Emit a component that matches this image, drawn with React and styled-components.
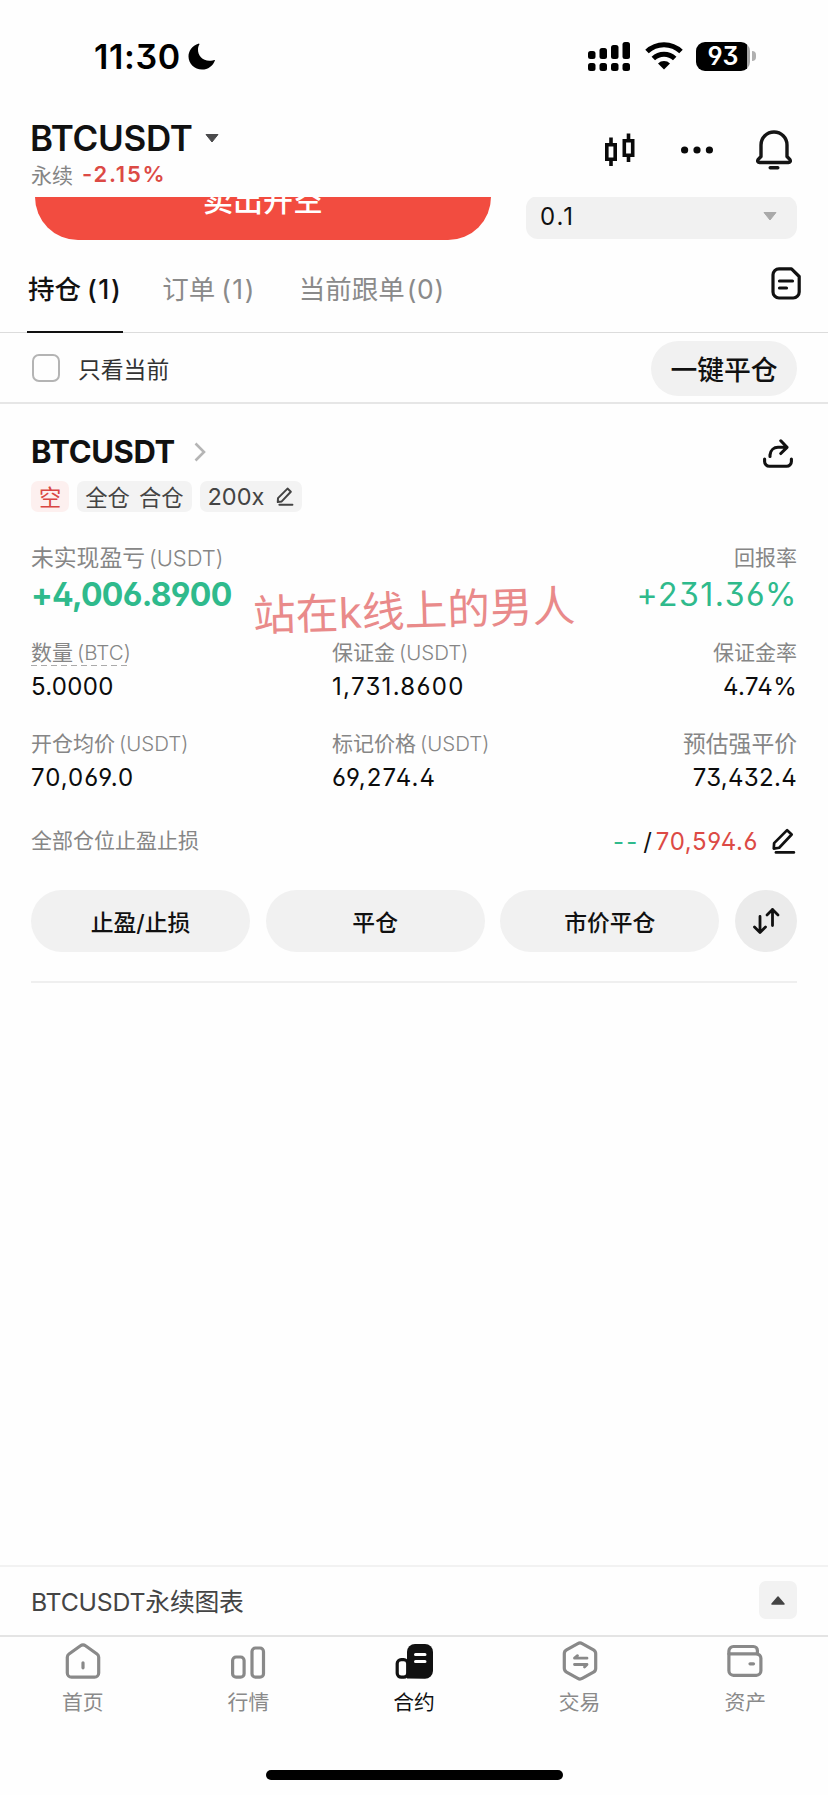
import styled, { createGlobalStyle } from "styled-components";

const positionRows = [
  [
    { label: "数量", unit: "(BTC)", value: "5.0000", dashed: true },
    { label: "保证金", unit: "(USDT)", value: "1,731.8600", spacing: 1.3 },
    { label: "保证金率", value: "4.74%" },
  ],
  [
    { label: "开仓均价", unit: "(USDT)", value: "70,069.0", spacing: 1 },
    { label: "标记价格", unit: "(USDT)", value: "69,274.4", spacing: 1.1 },
    { label: "预估强平价", value: "73,432.4", size: 22.8 },
  ],
];

const navItems = [
  { label: "首页", icon: HomeIcon },
  { label: "行情", icon: MarketIcon },
  { label: "合约", icon: FuturesIcon, active: true },
  { label: "交易", icon: TradeIcon },
  { label: "资产", icon: WalletIcon },
];

export default function App() {
  return (
    <>
      <GlobalStyle />
      <Screen>
        <StatusBar />
        <Header>
          <div>
            <PairRow>
              <Pair>BTCUSDT</Pair>
              <svg width="14" height="9" viewBox="0 0 14 9">
                <path d="M1 0.5h12L7 8z" fill="#4a4a4c" stroke="#4a4a4c" strokeLinejoin="round" />
              </svg>
            </PairRow>
            <ChangeRow>
              永续<Change>-2.15%</Change>
            </ChangeRow>
          </div>
          <HeaderIcons>
            <CandleIcon />
            <DotsIcon />
            <BellIcon />
          </HeaderIcons>
        </Header>

        <OrderStrip>
          <SellButton>卖出开空</SellButton>
          <Select>
            0.1
            <svg width="14" height="9" viewBox="0 0 14 9">
              <path d="M1 0.5h12L7 8z" fill="#a9a9a9" stroke="#a9a9a9" strokeLinejoin="round" />
            </svg>
          </Select>
        </OrderStrip>

        <Tabs>
          <Tab $active>
            持仓<TabCount>(1)</TabCount>
          </Tab>
          <Tab>
            订单<TabCount>(1)</TabCount>
          </Tab>
          <Tab>
            当前跟单<TabCount $tight>(0)</TabCount>
          </Tab>
          <OrdersIcon />
        </Tabs>

        <FilterRow>
          <Checkbox />
          <FilterLabel>只看当前</FilterLabel>
          <CloseAll>一键平仓</CloseAll>
        </FilterRow>

        <Position>
          <TitleRow>
            <Title>BTCUSDT</Title>
            <svg width="12" height="20" viewBox="0 0 12 20">
              <path d="M1.5 1.5l8.5 8.5-8.5 8.5" fill="none" stroke="#b5b5b5" strokeWidth="2.6" />
            </svg>
            <ShareIcon />
          </TitleRow>
          <Tags>
            <Tag $red>空</Tag>
            <Tag>
              <span>全仓</span>
              <span>合仓</span>
            </Tag>
            <Tag $leverage>
              200x
              <EditIcon size={19} color="#444" />
            </Tag>
          </Tags>

          <PnlRow>
            <div>
              <Label $size={22.8}>
                未实现盈亏<Unit $size={22}>(USDT)</Unit>
              </Label>
              <Pnl $bold>+4,006.8900</Pnl>
            </div>
            <Cell $right>
              <Label>回报率</Label>
              <Pnl>+231.36%</Pnl>
            </Cell>
            <Watermark>站在k线上的男人</Watermark>
          </PnlRow>

          {positionRows.map((row, i) => (
            <StatRow key={i}>
              {row.map((cell, j) => (
                <Cell key={cell.label} $right={j === 2}>
                  <Label $size={cell.size} $dashed={cell.dashed}>
                    {cell.label}
                    {cell.unit && <Unit>{cell.unit}</Unit>}
                  </Label>
                  <Value $spacing={cell.spacing}>{cell.value}</Value>
                </Cell>
              ))}
            </StatRow>
          ))}

          <StopRow>
            <Label>全部仓位止盈止损</Label>
            <StopValue>
              <Dashes>--</Dashes>
              <Slash>/</Slash>
              <StopPrice>70,594.6</StopPrice>
              <EditIcon size={26} color="#111" />
            </StopValue>
          </StopRow>

          <Actions>
            <Action>止盈/止损</Action>
            <Action>平仓</Action>
            <Action>市价平仓</Action>
            <SwapButton>
              <svg width="28" height="28" viewBox="0 0 28 28" fill="none" stroke="#111" strokeWidth="2.8" strokeLinecap="round" strokeLinejoin="round">
                <path d="M8 9.5v16M2.5 20L8 25.5l5.500-5.500" />
                <path d="M20.500 18.500V2.500M15 8L20.500 2.500l5.500 5.500" />
              </svg>
            </SwapButton>
          </Actions>
        </Position>

        <ChartBar>
          <ChartLabel>
            BTCUSDT<span>永续图表</span>
          </ChartLabel>
          <Expand>
            <svg width="14" height="9" viewBox="0 0 14 9">
              <path d="M1 8h12L7 1z" fill="#444" stroke="#444" strokeWidth="1.500" strokeLinejoin="round" />
            </svg>
          </Expand>
        </ChartBar>
        <Nav>
          {navItems.map(({ label, icon: Icon, active }) => (
            <NavItem key={label} $active={active}>
              <Icon />
              {label}
            </NavItem>
          ))}
        </Nav>
        <HomeIndicator />
      </Screen>
    </>
  );
}

function StatusBar() {
  return (
    <Status>
      <Time>11:30</Time>
      <svg width="28" height="27" viewBox="0 0 28 27">
        <path d="M11 0.500C3.500 2.500 0.500 8.500 0.500 13.500C0.500 20.500 6.500 26.500 14 26.500C20 26.500 25 23 27 17.200C26.500 16.600 25.500 17.300 24.500 17.500C16 19.500 9.500 13 10 6C10.100 3.500 11 2.200 11.500 1.200Z" fill="#000" />
      </svg>
      <Signals>
        <svg width="43" height="29" viewBox="0 0 43 29">
          <rect x="0" y="9" width="7.500" height="8" rx="2.500" />
          <rect x="11.500" y="6" width="7.500" height="11" rx="2.500" />
          <rect x="23" y="3" width="7.500" height="14" rx="2.500" />
          <rect x="34.500" y="0" width="7.500" height="17" rx="2.500" />
          <rect x="0" y="21" width="7.500" height="8" rx="2.500" />
          <rect x="11.500" y="21" width="7.500" height="8" rx="2.500" />
          <rect x="23" y="21" width="7.500" height="8" rx="2.500" />
          <rect x="34.500" y="21" width="7.500" height="8" rx="2.500" />
        </svg>
        <svg width="38" height="28" viewBox="0 0 38 28" fill="none" stroke="#000" strokeWidth="5">
          <path d="M2 9.500a24.500 24.500 0 0 1 34 0" />
          <path d="M8.300 16.500a15.500 15.500 0 0 1 21.400 0" />
          <path d="M19 27.500l-6-6a8.600 8.600 0 0 1 12 0z" fill="#000" stroke="none" />
        </svg>
        <Battery>
          <BatteryBody>93</BatteryBody>
          <BatteryTip />
        </Battery>
      </Signals>
    </Status>
  );
}

function CandleIcon() {
  return (
    <svg width="32" height="34" viewBox="0 0 32 34" fill="none" stroke="#0a0a0a" strokeWidth="3.600">
      <path d="M2.800 11.800h8.400v14.400H2.800zM7 4.500v7M7 26v7M20.300 7.800h8.400v14.400h-8.400zM24.500 0.500v7M24.500 22v7" />
    </svg>
  );
}

function DotsIcon() {
  return (
    <svg width="32" height="8" viewBox="0 0 32 8" fill="#0a0a0a">
      <circle cx="3.600" cy="4" r="3.600" />
      <circle cx="16" cy="4" r="3.600" />
      <circle cx="28.400" cy="4" r="3.600" />
    </svg>
  );
}

function BellIcon() {
  return (
    <svg width="36" height="40" viewBox="0 0 36 40" fill="none" stroke="#151515" strokeWidth="3.400" strokeLinecap="round" strokeLinejoin="round">
      <path d="M5 15a13 13 0 0 1 26 0v11.500l3 3.200c0.800 1.600 0 2.800-1.500 2.800H3.500c-1.500 0-2.300-1.200-1.500-2.800l3-3.200z" />
      <path d="M14.200 37.700h7.600" />
    </svg>
  );
}

function OrdersIcon() {
  return (
    <svg width="30" height="33" viewBox="0 0 30 33" fill="none" stroke="#111" strokeWidth="3.200" strokeLinecap="round" strokeLinejoin="round">
      <path d="M8 1.800h12.500l7.700 7.700V25a6 6 0 0 1-6 6H8a6 6 0 0 1-6-6V7.800a6 6 0 0 1 6-6z" />
      <path d="M8.500 14h13M8.500 21h7" />
    </svg>
  );
}

function ShareIcon() {
  return (
    <svg width="30" height="29" viewBox="0 0 30 29" fill="none" stroke="#111" strokeWidth="3.100" strokeLinecap="round" strokeLinejoin="round">
      <path d="M1.600 20v2.500a4.800 4.800 0 0 0 4.800 4.800h17.200a4.800 4.800 0 0 0 4.800-4.800V20" />
      <path d="M7 17.500v-1.500C7.500 11 11 8.300 15 8.300h8.500M17.800 1.800l6.200 6.500-6.200 6.200" />
    </svg>
  );
}

function EditIcon({ size, color }) {
  return (
    <svg width={size} height={size} viewBox="0 0 24 24" fill="none" stroke={color} strokeWidth="2.500" strokeLinecap="round" strokeLinejoin="round">
      <path d="M15.800 2l4.200 4-11.500 12.200-5 0.800 0.300-5z" />
      <path d="M5.500 22.500h16.500" />
    </svg>
  );
}

function HomeIcon() {
  return (
    <svg width="36" height="38" viewBox="0 0 36 38" fill="none" stroke="#898989" strokeWidth="3.200" strokeLinecap="round" strokeLinejoin="round">
      <path d="M15.500 3.800a4 4 0 0 1 5 0l11.500 8.200a4 4 0 0 1 1.700 3.200V31a4.200 4.200 0 0 1-4.200 4.200H6.500A4.200 4.200 0 0 1 2.300 31V15.200A4 4 0 0 1 4 12z" />
      <path d="M18 20.800v5" />
    </svg>
  );
}

function MarketIcon() {
  return (
    <svg width="36" height="38" viewBox="0 0 36 38" fill="none" stroke="#898989" strokeWidth="3.200">
      <rect x="2.600" y="15" width="11.500" height="20.200" rx="3.500" />
      <rect x="22" y="6" width="11.500" height="29.200" rx="3.500" />
    </svg>
  );
}

function FuturesIcon() {
  return (
    <svg width="38" height="38" viewBox="0 0 38 38">
      <path d="M12 36.500V10a8 8 0 0 1 8-8h10a8 8 0 0 1 8 8v19a8 8 0 0 1-8 7.700z" fill="#111" />
      <rect x="2.200" y="17.600" width="10.500" height="17.600" rx="4" fill="#fff" stroke="#111" strokeWidth="3.200" />
      <path d="M20.500 12.500h9.500M20.500 19.500h9.500" stroke="#fff" strokeWidth="3" strokeLinecap="round" />
    </svg>
  );
}

function TradeIcon() {
  return (
    <svg width="36" height="40" viewBox="0 0 36 40" fill="none" stroke="#898989" strokeWidth="3.200" strokeLinecap="round" strokeLinejoin="round">
      <path d="M15.800 2.600a4.500 4.500 0 0 1 4.400 0l11.300 6.300a4.300 4.300 0 0 1 2.200 3.800v14.600a4.300 4.300 0 0 1-2.200 3.800l-11.300 6.300a4.500 4.500 0 0 1-4.400 0L4.500 31.100a4.300 4.300 0 0 1-2.200-3.800V12.700a4.300 4.300 0 0 1 2.200-3.800z" />
      <path d="M25 17.200H12.500l3-2.500M12.500 23.500H25l-2.500 2.500" strokeWidth="2.800" />
    </svg>
  );
}

function WalletIcon() {
  return (
    <svg width="36" height="38" viewBox="0 0 36 38" fill="none" stroke="#898989" strokeWidth="3.200" strokeLinecap="round" strokeLinejoin="round">
      <path d="M1.900 11.800V9a4.500 4.500 0 0 1 4.500-4.500h20a4 4 0 0 1 4 4v3.300" />
      <path d="M1.900 11.800h27.500a4.500 4.500 0 0 1 4.500 4.500v12.500a4.500 4.500 0 0 1-4.500 4.500h-23a4.500 4.500 0 0 1-4.500-4.500z" />
      <path d="M23 21.800h3.500" />
    </svg>
  );
}

const GlobalStyle = createGlobalStyle`
  * {
    box-sizing: border-box;
  }
  body {
    margin: 0;
    background: #fefefe;
    font-family: Inter, "Noto Sans CJK SC", sans-serif;
    font-feature-settings: "ss01";
    color: #111;
  }
  svg {
    display: block;
    flex-shrink: 0;
  }
  button {
    font-family: inherit;
    border: 0;
    padding: 0;
  }
`;

const Screen = styled.div`
  width: 828px;
  height: 1795px;
  display: flex;
  flex-direction: column;
  overflow: hidden;
  white-space: nowrap;
`;

const Status = styled.div`
  height: 112px;
  padding: 0 72px 0 94px;
  display: flex;
  align-items: center;
`;

const Time = styled.div`
  width: 94px;
  font-size: 34px;
  font-weight: 600;
  letter-spacing: 0.6px;
  color: #000;
`;

const Signals = styled.div`
  margin-left: auto;
  display: flex;
  align-items: center;
  gap: 13.500px;
`;

const Battery = styled.div`
  display: flex;
  align-items: center;
  gap: 2px;
`;

const BatteryBody = styled.div`
  width: 54px;
  height: 29px;
  border-radius: 9px;
  background: linear-gradient(to right, #000 51px, #a6a6a6 51px);
  color: #fff;
  font-size: 25px;
  font-weight: 600;
  line-height: 29px;
  text-align: center;
`;

const BatteryTip = styled.div`
  width: 4px;
  height: 10px;
  border-radius: 0 5px 5px 0;
  background: #b0b0b0;
`;

const Header = styled.div`
  height: 85px;
  padding: 0 36px 0 30px;
  display: flex;
  justify-content: space-between;
`;

const PairRow = styled.div`
  height: 52px;
  display: flex;
  align-items: center;
  gap: 12px;
`;

const Pair = styled.div`
  font-size: 35px;
  font-weight: 600;
  letter-spacing: -0.3px;
`;

const ChangeRow = styled.div`
  display: flex;
  align-items: center;
  height: 20px;
  padding-left: 1px;
  font-size: 21px;
  color: #858585;
`;

const Change = styled.span`
  margin-left: 9px;
  font-weight: 600;
  font-size: 22px;
  letter-spacing: 1.800px;
  color: #dc4a45;
`;

const HeaderIcons = styled.div`
  height: 76px;
  display: flex;
  align-items: center;
  gap: 43px;

  svg:first-child {
    margin-right: 2px;
  }
`;

const OrderStrip = styled.div`
  height: 44px;
  padding: 0 31px 0 35px;
  display: flex;
  align-items: flex-end;
  justify-content: space-between;
  overflow: hidden;
`;

const SellButton = styled.button`
  width: 456px;
  height: 86px;
  margin-bottom: 1px;
  padding-top: 1px;
  flex-shrink: 0;
  border-radius: 43px;
  background: #f24c40;
  color: #fff;
  font-size: 30px;
  font-weight: 500;
`;

const Select = styled.div`
  width: 271px;
  height: 43px;
  margin-bottom: 2px;
  padding: 0 20px 2px 14px;
  display: flex;
  align-items: center;
  justify-content: space-between;
  border-radius: 12px;
  background: #f1f1f1;
  font-size: 24px;
  letter-spacing: 2px;
`;

const Tabs = styled.div`
  height: 92px;
  padding: 0 28px 0 27px;
  display: flex;
  border-bottom: 1px solid #dcdcdc;

  svg {
    margin: 26px -1px 0 auto;
  }
`;

const Tab = styled.div`
  height: 92px;
  padding: 6px 1px 0;
  margin-right: 38px;
  display: flex;
  line-height: 84px;
  font-size: 26.500px;
  font-weight: ${(p) => (p.$active ? 500 : 400)};
  color: ${(p) => (p.$active ? "#111" : "#8a8a8a")};
  border-bottom: 2px solid ${(p) => (p.$active ? "#111" : "transparent")};

  &:nth-child(3) {
    margin-left: 3px;
  }
`;

const TabCount = styled.span`
  margin-left: ${(p) => (p.$tight ? 2 : 6)}px;
  letter-spacing: ${(p) => (p.$tight ? 0.6 : 1.5)}px;
`;

const FilterRow = styled.div`
  height: 71px;
  padding: 1px 31px 0 32px;
  display: flex;
  align-items: center;
  border-bottom: 2px solid #e6e6e6;
`;

const Checkbox = styled.div`
  width: 28px;
  height: 28px;
  border: 2px solid #b4b4b4;
  border-radius: 7px;
`;

const FilterLabel = styled.div`
  margin-left: 18px;
  font-size: 22.800px;
  color: #333;
`;

const CloseAll = styled.button`
  width: 146px;
  height: 55px;
  margin-left: auto;
  border-radius: 28px;
  background: #f1f1f1;
  color: #111;
  font-size: 26.800px;
  font-weight: 500;
`;

const Position = styled.div`
  height: 579px;
  margin: 0 31px;
  border-bottom: 2px solid #efefef;
`;

const TitleRow = styled.div`
  height: 77px;
  padding: 18px 4px 0 0;
  display: flex;
  align-items: center;

  svg:last-child {
    margin-left: auto;
    margin-top: 4px;
  }
`;

const Title = styled.div`
  width: 163px;
  font-size: 31px;
  font-weight: 700;
  letter-spacing: -0.4px;
`;

const Tags = styled.div`
  height: 31px;
  display: flex;
  gap: 8px;
`;

const Tag = styled.div`
  height: 31px;
  padding: 0 8px 1px;
  display: flex;
  align-items: center;
  gap: ${(p) => (p.$leverage ? 11 : 9)}px;
  border-radius: 7px;
  background: ${(p) => (p.$red ? "#fdf0ef" : "#f3f3f3")};
  color: ${(p) => (p.$red ? "#d94743" : "#444")};
  font-size: ${(p) => (p.$leverage ? 23.5 : 22.3)}px;
`;

const PnlRow = styled.div`
  position: relative;
  height: 124px;
  padding-top: 33px;
  display: flex;
  justify-content: space-between;
`;

const Cell = styled.div`
  text-align: ${(p) => (p.$right ? "right" : "left")};
`;

const Label = styled.div`
  display: inline-block;
  height: 26px;
  line-height: 26px;
  font-size: ${(p) => p.$size || 21}px;
  color: #868686;
  ${(p) =>
    p.$dashed &&
    `
    background: repeating-linear-gradient(to right, #aaa 0 6px, transparent 6px 10px) bottom / 100% 1px no-repeat;
  `}
`;

const Unit = styled.span`
  margin-left: 4px;
  font-size: ${(p) => p.$size || 20.5}px;
  font-weight: 300;
`;

const Pnl = styled.div`
  height: 46px;
  line-height: 47px;
  font-size: 32px;
  font-weight: ${(p) => (p.$bold ? 700 : 400)};
  letter-spacing: ${(p) => (p.$bold ? -0.7 : 1.5)}px;
  margin-right: ${(p) => (p.$bold ? 0 : -1)}px;
  color: #2fba8c;
`;

const Watermark = styled.div`
  position: absolute;
  left: 222px;
  top: 69px;
  font-size: 42.700px;
  line-height: 60px;
  color: #e98a8a;
  transform: rotate(-1.800deg);
`;

const StatRow = styled.div`
  height: 91px;
  padding-top: 4px;
  display: grid;
  grid-template-columns: 301px 240px 1fr;
`;

const Value = styled.div`
  height: 40px;
  line-height: 41px;
  font-size: 24px;
  letter-spacing: ${(p) => p.$spacing || 0.3}px;
  color: #0c0c0c;
`;

const StopRow = styled.div`
  height: 46px;
  display: flex;
  align-items: center;
  justify-content: space-between;
`;

const StopValue = styled.div`
  display: flex;
  align-items: center;
  padding-right: 1px;
  font-size: 24px;
`;

const Dashes = styled.span`
  color: #2fba8c;
  letter-spacing: 2px;
`;

const Slash = styled.span`
  margin: 0 4px;
`;

const StopPrice = styled.span`
  margin-right: 12px;
  letter-spacing: 0.6px;
  color: #dc4a45;
`;

const Actions = styled.div`
  margin-top: 26px;
  display: flex;
  justify-content: space-between;
`;

const Action = styled.button`
  width: 219px;
  height: 62px;
  border-radius: 31px;
  background: #f1f1f1;
  color: #111;
  font-size: 22.800px;
  font-weight: 500;
`;

const SwapButton = styled.button`
  width: 62px;
  height: 62px;
  display: grid;
  place-items: center;
  border-radius: 50%;
  background: #ebebeb;
`;

const ChartBar = styled.div`
  height: 70px;
  margin-top: auto;
  padding: 0 31px 2px 31px;
  display: flex;
  align-items: center;
  justify-content: space-between;
  border-top: 2px solid #f2f2f2;
`;

const ChartLabel = styled.div`
  font-size: 24.800px;
  letter-spacing: -0.2px;
  color: #444;
`;

const Expand = styled.div`
  width: 38px;
  height: 38px;
  display: grid;
  place-items: center;
  border-radius: 7px;
  background: #f2f2f2;
`;

const Nav = styled.div`
  height: 135px;
  display: grid;
  grid-template-columns: repeat(5, 1fr);
  border-top: 2px solid #e4e4e4;
`;

const NavItem = styled.div`
  padding-top: 4px;
  display: flex;
  flex-direction: column;
  align-items: center;
  font-size: 20.800px;
  line-height: 30px;
  color: ${(p) => (p.$active ? "#111" : "#8a8a8a")};

  svg {
    height: 40px;
    margin-bottom: 7px;
  }
`;

const HomeIndicator = styled.div`
  width: 297px;
  height: 10px;
  margin: 0 auto 15px;
  flex-shrink: 0;
  border-radius: 5px;
  background: #000;
`;
